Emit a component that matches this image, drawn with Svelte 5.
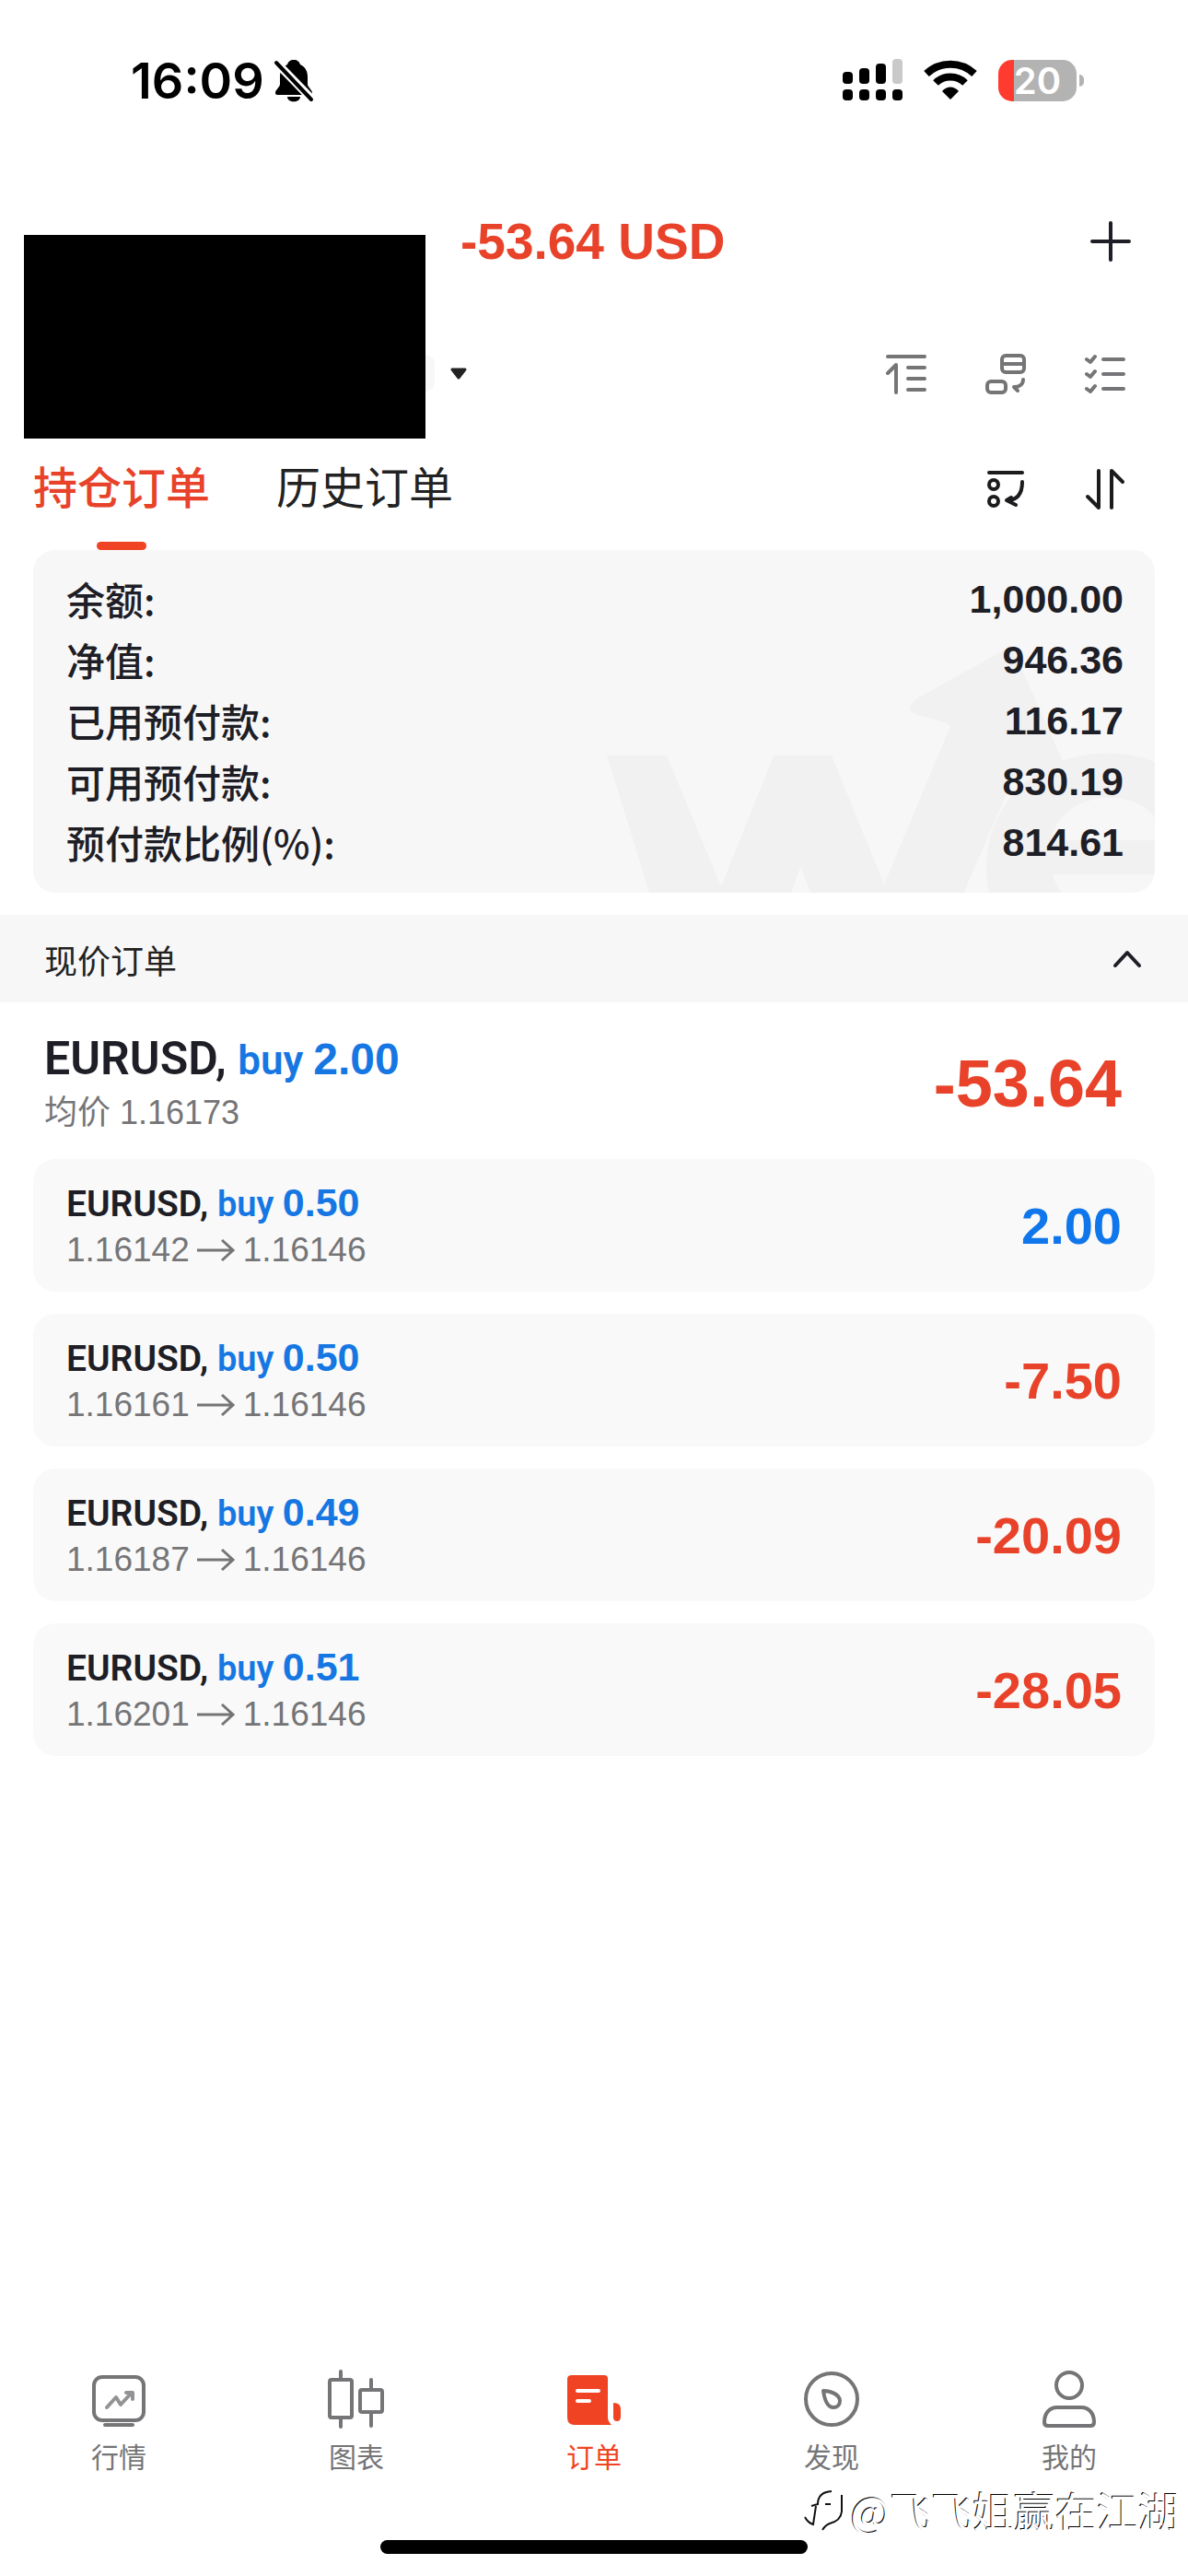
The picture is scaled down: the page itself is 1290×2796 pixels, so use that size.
<script lang="ts">
    const resumen = [
        { nombre: "余额:", valor: "1,000.00" },
        { nombre: "净值:", valor: "946.36" },
        { nombre: "已用预付款:", valor: "116.17" },
        { nombre: "可用预付款:", valor: "830.19" },
        { nombre: "预付款比例(%):", valor: "814.61" },
    ];

    const ordenes = [
        { lotes: "0.50", apertura: "1.16142", actual: "1.16146", beneficio: "2.00" },
        { lotes: "0.50", apertura: "1.16161", actual: "1.16146", beneficio: "-7.50" },
        { lotes: "0.49", apertura: "1.16187", actual: "1.16146", beneficio: "-20.09" },
        { lotes: "0.51", apertura: "1.16201", actual: "1.16146", beneficio: "-28.05" },
    ];

    const secciones = [
        { id: "quotes", nombre: "行情" },
        { id: "charts", nombre: "图表" },
        { id: "orders", nombre: "订单" },
        { id: "discover", nombre: "发现" },
        { id: "me", nombre: "我的" },
    ];

    let pestana = $state("open");
    let abierto = $state(true);
    let seccion = $state("orders");
</script>

<div class="app">
    <div class="status">
        <div class="status-side">
            <span class="clock">16:09</span>
            <svg width="44" height="48" viewBox="0 0 44 48">
                <path d="M22 2c-4 0-6 2-7 5-6 3-8 8-8 13v8c0 4-5 6-5 10 0 1 1 2 2 2h36c1 0 2-1 2-2 0-4-5-6-5-10v-8c0-5-2-10-8-13-1-3-3-5-7-5z M15 42h14c0 7-14 7-14 0z" />
                <path d="M3 5l39 40" stroke="#fff" stroke-width="9" />
                <path d="M3 5l38 40" stroke="#000" stroke-width="4" stroke-linecap="round" />
            </svg>
        </div>
        <div class="status-side right">
            <svg width="65" height="46" viewBox="0 0 65 46">
                <rect x="0" y="14" width="11" height="13" rx="4" />
                <rect x="18" y="10" width="11" height="17" rx="4" />
                <rect x="36" y="5" width="11" height="22" rx="4" />
                <rect x="54" y="0" width="11" height="27" rx="4" fill="#c9c9c9" />
                <rect x="0" y="33" width="11" height="12" rx="4" />
                <rect x="18" y="33" width="11" height="12" rx="4" />
                <rect x="36" y="33" width="11" height="12" rx="4" />
                <rect x="54" y="33" width="11" height="12" rx="4" />
            </svg>
            <svg width="58" height="44" viewBox="0 0 58 44">
                <path d="M3 15a38 38 0 0 1 52 0" fill="none" stroke="#000" stroke-width="8" />
                <path d="M13 25a23 23 0 0 1 32 0" fill="none" stroke="#000" stroke-width="8" />
                <path d="M29 43l-9-9c5-6 13-6 18 0z" />
            </svg>
            <div class="battery"><span>20</span></div>
        </div>
    </div>

    <header>
        <div class="masked"></div>
        <div class="account">
            <div class="account-row">
                <strong class="total">-53.64 USD</strong>
                <button class="icon" aria-label="新建订单">
                    <svg width="44" height="44" viewBox="0 0 44 44" fill="none" stroke="#1e1e26" stroke-width="4" stroke-linecap="round">
                        <path d="M22 2v40M2 22h40" />
                    </svg>
                </button>
            </div>
            <div class="account-row">
                <button class="icon" aria-label="切换账户">
                    <svg width="20" height="14" viewBox="0 0 20 14">
                        <path d="M3 2h14l-7 9z" fill="#222" stroke="#222" stroke-width="3" stroke-linejoin="round" />
                    </svg>
                </button>
                <div class="tools gray">
                    <button class="icon" aria-label="排序">
                        <svg width="44" height="44" viewBox="0 0 44 44" fill="none" stroke="#757577" stroke-width="4" stroke-linecap="round" stroke-linejoin="round">
                            <path d="M2 3h40M24 15h18M24 27h18M24 39h18M2 21l9-9v30" />
                        </svg>
                    </button>
                    <button class="icon" aria-label="分组">
                        <svg width="44" height="44" viewBox="0 0 44 44" fill="none" stroke="#757577" stroke-width="4" stroke-linecap="round" stroke-linejoin="round">
                            <rect x="18" y="2" width="24" height="18" rx="4" />
                            <path d="M18 11h24" />
                            <rect x="2" y="30" width="20" height="12" rx="4" />
                            <path d="M41 28c0 5-4 8-10 8M31 36l4 4" />
                        </svg>
                    </button>
                    <button class="icon" aria-label="批量操作">
                        <svg width="44" height="44" viewBox="0 0 44 44" fill="none" stroke="#757577" stroke-width="4" stroke-linecap="round" stroke-linejoin="round">
                            <path d="M20 6h22M20 22h22M20 38h22" />
                            <path d="M2 6l4 3 5-6M2 22l4 3 5-6M2 38l4 3 5-6" />
                        </svg>
                    </button>
                </div>
            </div>
        </div>
    </header>

    <div class="tabs">
        <button class:active={pestana == "open"} onclick={() => (pestana = "open")}>持仓订单</button>
        <button class:active={pestana == "history"} onclick={() => (pestana = "history")}>历史订单</button>
        <div class="tools">
            <button class="icon" aria-label="合并显示">
                <svg width="44" height="44" viewBox="0 0 44 44" fill="none" stroke="#1c1c1e" stroke-width="4" stroke-linecap="round" stroke-linejoin="round">
                    <path d="M4 4h36" />
                    <circle cx="9" cy="17" r="5" />
                    <circle cx="9" cy="35" r="5" />
                    <path d="M40 14c0 13-5 20-17 20l10 5M23 34l5-3" />
                </svg>
            </button>
            <button class="icon" aria-label="升降序">
                <svg width="44" height="44" viewBox="0 0 44 44" fill="none" stroke="#1c1c1e" stroke-width="4" stroke-linecap="round" stroke-linejoin="round">
                    <path d="M15 2v40L3 30M29 42V2l12 12" />
                </svg>
            </button>
        </div>
    </div>

    <section class="summary">
        <svg class="logo" width="600" height="270" viewBox="654 699 600 270" fill="#f2f1f2">
            <path d="M659 820h65l59 142 57-142h63l57 140 72-172c-8-5-20-8-36-12-10-4-10-10-2-17l97-54q7-4 10 2l57 128q3 9-7 7l-49-1-72 166H896l-27-66-23 66H717z" />
            <path d="M1254 827c-86-32-183 20-183 116q0 14 3 26h79q-7-9-10-20h111v-37h-113c10-52 87-60 113-25z" />
        </svg>
        <dl>
            {#each resumen as dato}
                <div class="summary-row">
                    <dt>{dato.nombre}</dt>
                    <dd>{dato.valor}</dd>
                </div>
            {/each}
        </dl>
    </section>

    <button class="section-title" aria-expanded={abierto} onclick={() => (abierto = !abierto)}>
        现价订单
        <svg width="32" height="20" viewBox="0 0 32 20" fill="none" stroke="#1e1e26" stroke-width="4" stroke-linecap="round" stroke-linejoin="round">
            <path d="M3 17L16 3l13 14" />
        </svg>
    </button>

    {#if abierto}
        <div class="group">
            <div>
                <p class="symbol">EURUSD, <span class="side">buy <b>2.00</b></span></p>
                <p class="price">均价 1.16173</p>
            </div>
            <strong class="profit loss">-53.64</strong>
        </div>
        <div class="orders">
            {#each ordenes as orden}
                <article>
                    <div>
                        <p class="symbol">EURUSD, <span class="side">buy <b>{orden.lotes}</b></span></p>
                        <p class="price">
                            {orden.apertura}
                            <svg width="42" height="26" viewBox="0 0 42 26" fill="none" stroke="#757577" stroke-width="3">
                                <path d="M0 13h38M27 2l12 11-12 11" />
                            </svg>
                            {orden.actual}
                        </p>
                    </div>
                    <strong class="profit" class:loss={orden.beneficio.startsWith("-")}>{orden.beneficio}</strong>
                </article>
            {/each}
        </div>
    {/if}

    <nav>
        {#each secciones as item}
            <a href="#{item.id}" class:active={seccion == item.id} onclick={() => (seccion = item.id)}>
                <svg width="66" height="66" viewBox="0 0 66 66" fill="none" stroke="currentColor" stroke-width="4" stroke-linecap="round" stroke-linejoin="round">
                    {#if item.id == "quotes"}
                        <rect x="6" y="9" width="54" height="47" rx="9" />
                        <path d="M18 61h30" />
                        <path d="M20 42l10-11 5 8 12-13M41 26h7v7" stroke="#949294" />
                    {:else if item.id == "charts"}
                        <rect x="4" y="12" width="24" height="41" rx="2" />
                        <path d="M16 3v9M16 53v10M49 12v11M49 47v15" />
                        <rect x="37" y="23" width="24" height="24" rx="2" />
                    {:else if item.id == "orders"}
                        <path d="M9 7h35q4 0 4 4v42q0 4 4 8H12q-8 0-8-8V11q0-4 5-4z" fill="currentColor" stroke="none" />
                        <path d="M15 24h23M15 35h13" stroke="#fff" />
                        <path d="M54 37q8 0 8 7v8q0 5-4 5-4 0-4-4z" fill="currentColor" stroke="none" />
                    {:else if item.id == "discover"}
                        <circle cx="33" cy="33" r="28" />
                        <path d="M24 24c8 0 18 4 18 11 0 4-3 7-7 7-8 0-10-11-11-18z" />
                    {:else}
                        <circle cx="33" cy="18" r="14" />
                        <path d="M20 42h26c9 0 14 7 14 16q0 4-4 4H10q-4 0-4-4c0-9 5-16 14-16z" />
                    {/if}
                </svg>
                {item.nombre}
            </a>
        {/each}
    </nav>

    <div class="home-bar"></div>

    <div class="watermark">
        <svg width="52" height="54" viewBox="0 0 52 54" fill="none" stroke="#111" stroke-width="2">
            <path d="M10 22l7-2Q17 7 32 6M25 20h6M43 10v18Q42 38 30 41q-5 2-8 7M15 22l-3 20q-6-2-9-8" />
        </svg>
        @飞飞姐赢在江湖
    </div>
</div>

<style>
    :global(body) {
        margin: 0;
        background: #fff;
    }
    .app {
        position: relative;
        display: flex;
        flex-direction: column;
        min-height: 100vh;
        background: #fff;
        color: #1e1e26;
        font-family: "Liberation Sans", "Noto Sans CJK SC", sans-serif;
    }
    button {
        padding: 0;
        border: 0;
        background: none;
        color: inherit;
        font: inherit;
    }
    svg {
        display: block;
        flex: none;
    }
    p, dl, dd {
        margin: 0;
    }

    .status {
        display: flex;
        justify-content: space-between;
        align-items: center;
        height: 174px;
        padding: 0 121px 0 142px;
    }
    .status-side {
        display: flex;
        align-items: center;
        gap: 10px;
    }
    .right {
        gap: 23px;
    }
    .clock {
        padding-top: 2px;
        color: #000;
        font: 600 54px/60px Inter, sans-serif;
    }
    .battery {
        position: relative;
        width: 85px;
        height: 45px;
        border-radius: 15px;
        background: linear-gradient(to right, #ff3b30 17px, #b3b3b3 17px);
        color: #fff;
        font: 600 40px/45px Inter, sans-serif;
        text-align: center;
    }
    .battery::after {
        content: "";
        position: absolute;
        top: 16px;
        right: -8px;
        width: 5px;
        height: 13px;
        border-radius: 0 5px 5px 0;
        background: #b3b3b3;
    }

    header {
        display: flex;
        align-items: flex-end;
        height: 302px;
        padding: 0 62px 0 26px;
    }
    .masked {
        position: relative;
        flex: none;
        width: 436px;
        height: 221px;
        background: #000;
    }
    /* end of the account pill, sticks out of the mask */
    .masked::after {
        content: "";
        position: absolute;
        top: 130px;
        left: 100%;
        width: 10px;
        height: 40px;
        border-radius: 0 10px 10px 0;
        background: #f7f7f7;
    }
    .account {
        flex: 1;
        display: flex;
        flex-direction: column;
        align-self: stretch;
        padding-top: 58px;
    }
    .account-row {
        display: flex;
        justify-content: space-between;
        align-items: center;
        height: 60px;
        padding-left: 38px;
    }
    .account-row + .account-row {
        margin-top: 84px;
        padding-left: 26px;
    }
    .total {
        color: #e8432a;
        font-size: 55px;
        line-height: 60px;
    }
    .tools {
        display: flex;
        gap: 64px;
    }
    .gray {
        padding-right: 6px;
    }

    .tabs {
        display: flex;
        align-items: flex-start;
        gap: 72px;
        height: 121px;
        padding: 0 68px 0 36px;
    }
    .tabs > button {
        position: relative;
        height: 121px;
        padding-bottom: 22px;
        box-sizing: border-box;
        color: #222;
        font-size: 48px;
    }
    .tabs > button.active {
        color: #e8432a;
        font-weight: 500;
    }
    .tabs > button.active::after {
        content: "";
        position: absolute;
        bottom: 0;
        left: 50%;
        width: 54px;
        height: 9px;
        margin-left: -27px;
        border-radius: 5px;
        background: #f04323;
    }
    .tabs .tools {
        margin: 33px 0 0 auto;
    }

    .summary {
        position: relative;
        overflow: hidden;
        margin: 0 36px;
        padding: 20px 34px 22px 36px;
        border-radius: 24px;
        background: #f8f7f8;
    }
    .logo {
        position: absolute;
        right: 0;
        bottom: 0;
    }
    .summary dl {
        position: relative;
    }
    .summary-row {
        display: flex;
        justify-content: space-between;
        font-size: 42px;
        line-height: 66px;
    }
    dt {
        font-family: "Noto Sans CJK SC", sans-serif;
        font-weight: 500;
    }
    dd {
        font-size: 43px;
        font-weight: 700;
    }

    .section-title {
        display: flex;
        justify-content: space-between;
        align-items: center;
        height: 95px;
        margin-top: 24px;
        padding: 0 50px 0 48px;
        background: #f7f7f8;
        color: #222;
        font-size: 36px;
    }

    .group, article {
        display: flex;
        justify-content: space-between;
        align-items: center;
    }
    .group {
        height: 168px;
        padding: 2px 72px 0 48px;
    }
    .symbol {
        font: 600 50px/66px Roboto, sans-serif;
    }
    .side {
        color: #1677e3;
        font-size: 44px;
    }
    .side b {
        font: 700 48px/60px "Liberation Sans", sans-serif;
    }
    .price {
        display: flex;
        align-items: center;
        gap: 8px;
        color: #757577;
        font-size: 36px;
        line-height: 48px;
    }
    .profit {
        color: #0f76ec;
        font-size: 56px;
    }
    .profit.loss {
        color: #e8432a;
    }
    .group .profit {
        padding-top: 4px;
        font-size: 72px;
    }

    .orders {
        display: flex;
        flex-direction: column;
        gap: 24px;
        padding: 0 36px;
    }
    article {
        height: 144px;
        padding: 0 36px;
        border-radius: 24px;
        background: #f9f9f9;
    }
    article .symbol {
        font-size: 39px;
        line-height: 52px;
    }
    article .side {
        font-size: 38px;
    }
    article .side b {
        font-size: 43px;
        line-height: 52px;
    }
    article .price {
        font-size: 37px;
    }

    nav {
        display: flex;
        margin-top: auto;
        padding-bottom: 68px;
    }
    nav a {
        flex: 1;
        display: flex;
        flex-direction: column;
        align-items: center;
        gap: 10px;
        color: #757577;
        font-size: 30px;
        line-height: 42px;
        text-decoration: none;
    }
    nav a.active {
        color: #f04323;
    }

    .home-bar {
        align-self: center;
        width: 36%;
        height: 15px;
        margin-bottom: 24px;
        border-radius: 8px;
        background: #000;
    }
    .watermark {
        position: absolute;
        right: 9px;
        bottom: 41px;
        display: flex;
        align-items: center;
        color: #fff;
        font: 45px/60px "Noto Sans CJK SC", sans-serif;
        text-shadow: -1px -1px 0 #000;
    }
</style>
